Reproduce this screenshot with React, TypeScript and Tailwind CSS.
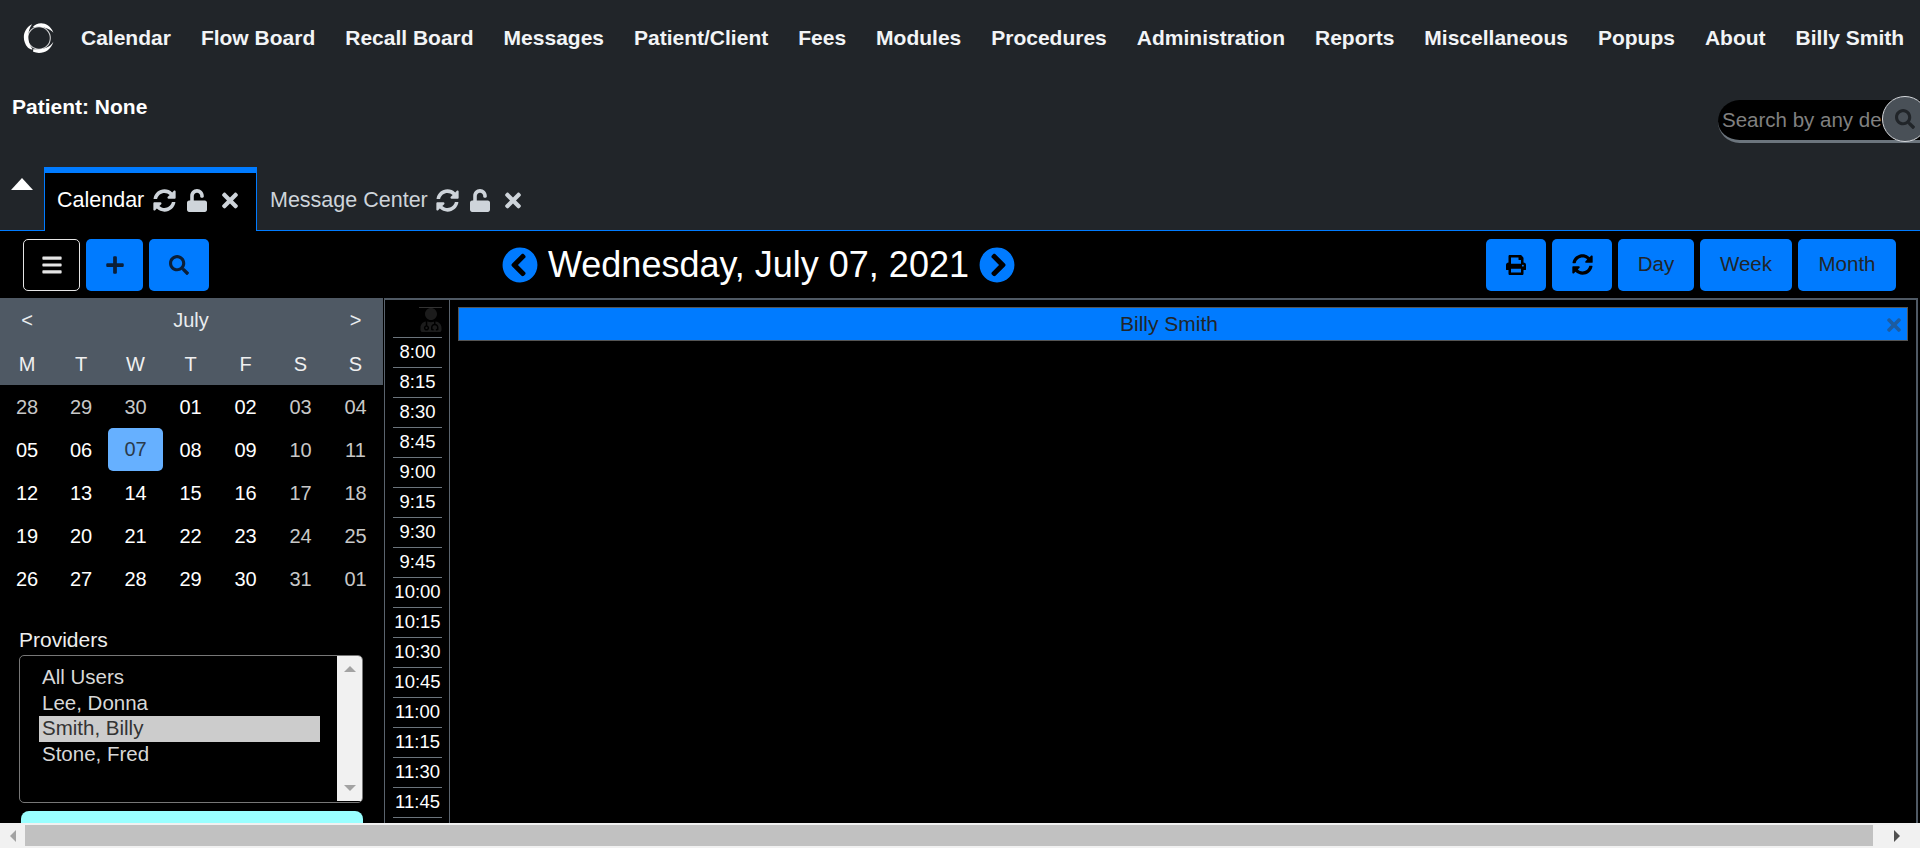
import React from "react";
import { FaSyncAlt, FaUnlock, FaTimes, FaBars, FaPlus, FaSearch, FaChevronCircleLeft, FaChevronCircleRight, FaPrint, FaUserMd } from "react-icons/fa";

const navItems = ["Calendar", "Flow Board", "Recall Board", "Messages", "Patient/Client", "Fees", "Modules", "Procedures", "Administration", "Reports", "Miscellaneous", "Popups", "About", "Billy Smith"];
const times = ["8:00", "8:15", "8:30", "8:45", "9:00", "9:15", "9:30", "9:45", "10:00", "10:15", "10:30", "10:45", "11:00", "11:15", "11:30", "11:45"];
const weeks = [
  ["28", "29", "30", "01", "02", "03", "04"],
  ["05", "06", "07", "08", "09", "10", "11"],
  ["12", "13", "14", "15", "16", "17", "18"],
  ["19", "20", "21", "22", "23", "24", "25"],
  ["26", "27", "28", "29", "30", "31", "01"],
];
const heads = ["M", "T", "W", "T", "F", "S", "S"];
const cols = "grid grid-cols-[54px_54px_55px_55px_55px_55px_55px]";
const providerRow = "pl-[3px] leading-[24px] pb-[1.6px]";

function Logo() {
  return (
    <svg width="32" height="32" viewBox="0 0 30 30" fill="none" className="shrink-0 ml-[-1px]">
      <circle cx="15" cy="15" r="10.6" stroke="#fff" strokeWidth="1" opacity="0.8" />
      <path d="M8.5 2 C0.5 6 -2 16 4.5 24 C6 25.5 8 26 9 25.5 C3.5 19 3.5 9 8.5 2 Z" fill="#fff" />
      <path d="M9 5 C14 -1 24.5 0 28.5 10 C24 5.5 16 3.5 9 5 Z" fill="#fff" />
      <path d="M9.5 28 C17 31 26 27.5 28.5 18.5 C24.5 25 17 26 9.5 25.5 Z" fill="#fff" />
    </svg>
  );
}

function TabIcons() {
  return (
    <span className="flex items-center text-[#ced4da]">
      <FaSyncAlt className="ml-[8px] w-[23px] h-[23px]" />
      <FaUnlock className="ml-[11px] w-[20px] h-[23px]" />
      <FaTimes className="ml-[14px] w-[18px] h-[23px]" />
    </span>
  );
}

function BlueButton({ className, children }: { className: string; children: React.ReactNode }) {
  return (
    <div className={"h-[52px] bg-[#007bff] rounded-[5px] flex items-center justify-center text-[#212529] text-[20.5px] " + className}>
      {children}
    </div>
  );
}

export default function App() {
  return (
    <div className="w-[1920px] h-[848px] overflow-hidden flex flex-col bg-white" style={{ fontFamily: '"Liberation Sans", Arial, sans-serif' }}>
      <div className="h-[823px] overflow-hidden flex flex-col">
        <header className="h-[231px] shrink-0 bg-[#212529] flex flex-col">
          <nav className="h-[76px] flex items-center pl-[24px] text-[#f2f4f6] font-bold text-[21px]">
            <Logo />
            <div className="flex ml-[26px] gap-[30px] whitespace-nowrap">
              {navItems.map((n) => (
                <span key={n}>{n}</span>
              ))}
            </div>
          </nav>
          <div className="h-[91px] flex justify-between">
            <div className="pl-[12px] pt-[19px] text-white font-bold text-[21px] leading-[24px]">Patient: None</div>
            <div className="relative mt-[24px] w-[202px] h-[43px] bg-black rounded-l-[22px] border-b-[3px] border-[#6c757d] pl-[4px]">
              <input
                readOnly
                placeholder="Search by any demographic"
                className="block w-[160px] h-[40px] bg-transparent outline-none text-[20.5px] placeholder:text-[#808080]"
              />
              <div className="absolute left-[164px] top-[-4px] w-[46px] h-[46px] rounded-full bg-[#495057] border border-[#d5d8dc] flex items-center justify-start pl-[12px] text-[#212529]">
                <FaSearch className="w-[20px] h-[20px]" />
              </div>
            </div>
          </div>
          <div className="h-[64px] flex border-b border-[#007bff] text-[21.5px]">
            <div className="w-[44px] flex justify-center pt-[11px]">
              <div className="w-0 h-0 border-x-[11px] border-x-transparent border-b-[12px] border-b-white ml-[-1px]" />
            </div>
            <div className="w-[213px] h-[64px] bg-black border-t-[6px] border-x border-[#007bff] flex items-center pl-[12px] text-white">
              <span className="mb-[4px] mr-[1px]">Calendar</span>
              <span className="mb-[4px]"><TabIcons /></span>
            </div>
            <div className="flex items-center pl-[13px] text-[#ced4da] pt-[3px]">
              <span>Message Center</span>
              <TabIcons />
            </div>
          </div>
        </header>

        <main className="flex-1 bg-black flex flex-col min-h-0 text-white">
          <div className="h-[67px] shrink-0 flex items-center pl-[23px] pr-[24px] justify-between">
            <div className="flex gap-[6px]">
              <div className="w-[57px] h-[52px] rounded-[5px] border border-[#e5e5e5] flex items-center justify-center text-[#e5e5e5]">
                <FaBars className="w-[20px] h-[22px]" />
              </div>
              <BlueButton className="w-[57px]"><FaPlus className="w-[18px] h-[20px] text-[#0b1f38]" /></BlueButton>
              <BlueButton className="w-[60px]"><FaSearch className="w-[20px] h-[20px] text-[#0b1f38]" /></BlueButton>
            </div>
            <div className="flex items-center gap-[10px] ml-[293px] mr-auto">
              <FaChevronCircleLeft className="w-[36px] h-[36px] text-[#007bff]" />
              <span className="text-[36px] leading-none whitespace-nowrap">Wednesday, July 07, 2021</span>
              <FaChevronCircleRight className="w-[36px] h-[36px] text-[#007bff]" />
            </div>
            <div className="flex gap-[6px]">
              <BlueButton className="w-[60px]"><FaPrint className="w-[20px] h-[20px] text-black" /></BlueButton>
              <BlueButton className="w-[60px]"><FaSyncAlt className="w-[21px] h-[21px] text-black" /></BlueButton>
              <BlueButton className="w-[76px]">Day</BlueButton>
              <BlueButton className="w-[92px]">Week</BlueButton>
              <BlueButton className="w-[98px]">Month</BlueButton>
            </div>
          </div>

          <div className="flex-1 min-h-0 flex">
            <aside className="w-[383px] shrink-0 flex flex-col overflow-hidden">
              <div className="h-[87px] bg-[#4f5964] text-[20px] shrink-0">
                <div className={cols + " h-[44px] items-center text-center text-[#e9ecef]"}>
                  <span>&lt;</span>
                  <span className="col-span-5">July</span>
                  <span>&gt;</span>
                </div>
                <div className={cols + " h-[43px] items-center text-center text-[#f0f0f0]"}>
                  {heads.map((h, i) => (
                    <span key={i}>{h}</span>
                  ))}
                </div>
              </div>
              <div className="text-[20px]">
                {weeks.map((w, ri) => (
                  <div key={ri} className={cols + " h-[43px] items-center text-center"}>
                    {w.map((d, ci) => {
                      const selected = d === "07";
                      const dim = ci >= 5 || (ri === 0 && ci < 3);
                      return (
                        <span
                          key={ci}
                          className={
                            selected
                              ? "h-[43px] leading-[43px] bg-[#66b0ff] text-[#2b3a4a] rounded-[5px]"
                              : dim
                                ? "text-[#c8c8c8]"
                                : "text-white"
                          }
                        >
                          {d}
                        </span>
                      );
                    })}
                  </div>
                ))}
              </div>
              <div className="pl-[19px] pt-[28px]">
                <div className="text-[21px] leading-[24px] text-[#eee]">Providers</div>
                <div className="mt-[3px] w-[344px] h-[148px] border border-[#777] rounded-[5px] flex overflow-hidden">
                  <div className="flex-1 pl-[19px] pr-[17px] pt-[9px] text-[20.5px] text-[#d8d8d8]">
                    <div className={providerRow}>All Users</div>
                    <div className={providerRow}>Lee, Donna</div>
                    <div className={providerRow + " bg-[#cccccc] text-[#333]"}>Smith, Billy</div>
                    <div className={providerRow}>Stone, Fred</div>
                  </div>
                  <div className="w-[25px] bg-[#f1f1f1] mb-[1px] flex flex-col justify-between items-center py-[10px]">
                    <div className="w-0 h-0 border-x-[6px] border-x-transparent border-b-[6px] border-b-[#a3a3a3]" />
                    <div className="w-0 h-0 border-x-[6px] border-x-transparent border-t-[6px] border-t-[#a3a3a3]" />
                  </div>
                </div>
                <div className="mt-[8px] ml-[2px] w-[342px] h-[40px] bg-[#99ffff] rounded-[8px]" />
              </div>
            </aside>

            <div className="flex-1 min-w-0 flex ml-[1px] mr-[2px] border-t-2 border-t-[#4f5964] border-r-2 border-r-[#4f5964] bg-black">
              <div className="w-[66px] shrink-0 border-x border-x-[#5a636d] pl-[8px] pr-[7px]">
                <div className="h-[37px] pt-[7px] flex justify-end">
                  <div className="w-[23px] h-[25px] border-t border-[#333] flex justify-center">
                    <FaUserMd className="w-[22px] h-[24px] text-[#1c1c1c]" />
                  </div>
                </div>
                {times.map((t) => (
                  <div key={t} className="h-[30px] border-t border-[#6c757d] text-center text-[18.5px] leading-[28px] text-white whitespace-nowrap">
                    {t}
                  </div>
                ))}
                <div className="h-[30px] border-t border-[#6c757d]" />
              </div>
              <div className="flex-1 min-w-0 pl-[8px] pr-[8px] pt-[7px]">
                <div className="h-[34px] bg-[#007bff] border border-[#555] flex items-center justify-center relative text-[#212529] text-[21px] pr-[28px]">
                  Billy Smith
                  <FaTimes className="absolute right-[5px] top-[7px] w-[16px] h-[20px] text-[#1d5ca0]" />
                </div>
              </div>
            </div>
          </div>
        </main>
      </div>

      <div className="h-[25px] shrink-0 bg-[#f1f1f1] flex items-center">
        <div className="w-[25px] flex justify-center">
          <div className="w-0 h-0 border-y-[6px] border-y-transparent border-r-[6px] border-r-[#a3a3a3]" />
        </div>
        <div className="w-[1848px] h-[21px] bg-[#c1c1c1]" />
        <div className="flex-1 flex justify-center">
          <div className="w-0 h-0 border-y-[6px] border-y-transparent border-l-[6px] border-l-[#505050]" />
        </div>
      </div>
    </div>
  );
}
